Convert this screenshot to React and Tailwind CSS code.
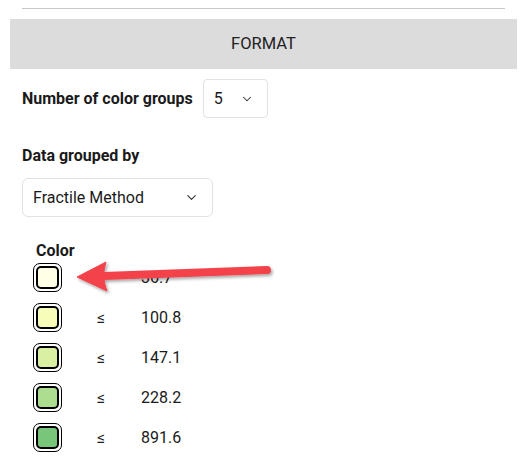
import { ChevronDown } from 'lucide-react';

const groups = [
  { color: '#ffffe5', value: '36.7' },
  { color: '#f7fcb9', value: '100.8' },
  { color: '#d9f0a3', value: '147.1' },
  { color: '#addd8e', value: '228.2' },
  { color: '#78c679', value: '891.6' },
];

function Swatch({ color }) {
  return (
    <div className="w-[29px] h-[29px] rounded-[7px] border border-black p-[2px] bg-white">
      <div className="w-full h-full rounded-[5px] border-2 border-black" style={{ backgroundColor: color }} />
    </div>
  );
}

function Arrow() {
  return (
    <svg className="absolute left-[60px] top-[250px]" width="230" height="60" viewBox="0 0 230 60">
      <defs>
        <filter id="sh" x="-20%" y="-50%" width="140%" height="200%">
          <feDropShadow dx="1.5" dy="2" stdDeviation="1.5" floodColor="#000" floodOpacity="0.35" />
        </filter>
      </defs>
      <g filter="url(#sh)" fill="#f3424a" stroke="#f3424a">
        <line x1="44" y1="26" x2="207" y2="20" strokeWidth="8" strokeLinecap="round" />
        <path d="M17 27 L46 12 Q41 26 47 41 Z" strokeWidth="1" strokeLinejoin="round" />
      </g>
    </svg>
  );
}

export default function App() {
  return (
    <div className="relative w-[530px] h-[460px] bg-white text-[#1a1a1a] overflow-hidden" style={{ fontFamily: 'Roboto, "Liberation Sans", sans-serif' }}>
      <div className="pt-2">
        <div className="ml-[22px] w-[483px] h-px bg-[#c8c8c8]" />
      </div>

      <div className="mt-[10px] ml-[10px] w-[507px] h-[50px] bg-[#dcdcdc] flex items-center justify-center text-[16.5px] text-[#222]">
        FORMAT
      </div>

      <div className="mt-[10px] ml-[22px] flex items-center">
        <span className="text-[16px] font-bold">Number of color groups</span>
        <div className="ml-[10px] w-[65px] h-[39px] border border-[#e2e2e2] rounded-[4px] flex items-center pl-[10px] pr-[13px] justify-between">
          <span className="text-[16px]">5</span>
          <ChevronDown className="w-[14px] h-[14px] text-[#333]" strokeWidth={1.8} />
        </div>
      </div>

      <div className="mt-[28px] ml-[22px] text-[16px] font-bold leading-5">Data grouped by</div>

      <div className="mt-[12px] ml-[22px] w-[191px] h-[39px] border border-[#e2e2e2] rounded-[6px] flex items-center justify-between pl-[10px] pr-[13px]">
        <span className="text-[16px]">Fractile Method</span>
        <ChevronDown className="w-[15px] h-[15px] text-[#333]" strokeWidth={1.8} />
      </div>

      <div className="mt-[24px] ml-[36px] text-[16px] font-bold leading-5">Color</div>

      <div className="mt-[2px] ml-[33px] flex flex-col gap-[11px]">
        {groups.map((g) => (
          <div key={g.value} className="flex items-center h-[29px]">
            <Swatch color={g.color} />
            <span className="ml-[35px] w-[44px] text-[16px]">≤</span>
            <span className="text-[16px]">{g.value}</span>
          </div>
        ))}
      </div>

      <Arrow />
    </div>
  );
}
